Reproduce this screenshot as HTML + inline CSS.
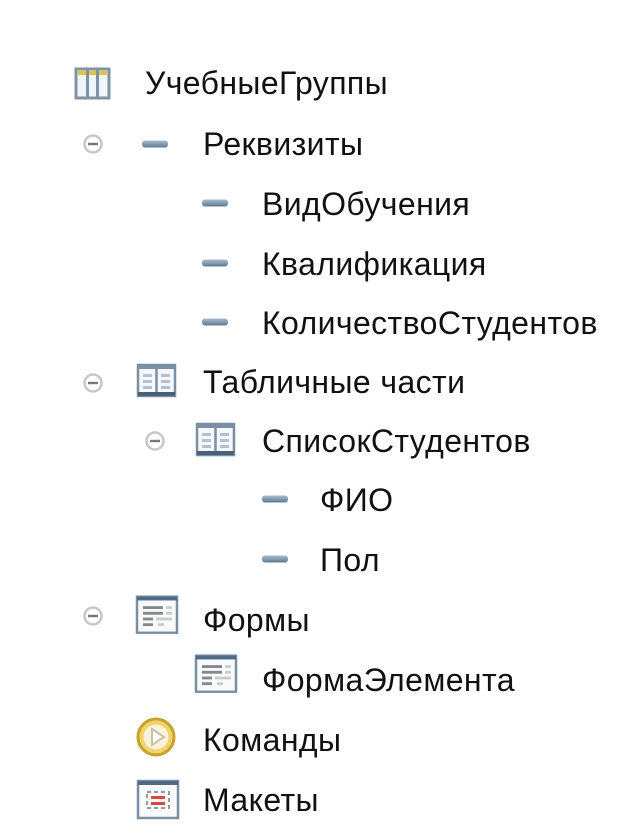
<!DOCTYPE html><html><head><meta charset="utf-8"><style>
body{margin:0;width:631px;height:837px;background:#fff;position:relative;overflow:hidden;font-family:"Liberation Sans","DejaVu Sans",sans-serif;}
.t{position:absolute;font-size:32px;letter-spacing:0.4px;color:#111;line-height:34px;white-space:nowrap}
</style></head><body>
<svg width="631" height="837" style="position:absolute;left:0;top:0">
<defs>
<linearGradient id="bar" x1="0" y1="0" x2="0" y2="1"><stop offset="0" stop-color="#a9bccd"/><stop offset="1" stop-color="#5f7a92"/></linearGradient>
<g id="minus"><circle cx="0" cy="0" r="8.5" fill="#fff" stroke="#c8c8c8" stroke-width="2.5"/><rect x="-5" y="-1.2" width="10" height="2.4" fill="#777"/></g>
<g id="dash"><rect x="0" y="-3.5" width="26" height="7" rx="3" fill="url(#bar)"/></g>
<g id="tbl"><rect x="0" y="-15" width="37" height="31" fill="#f4f7fb" stroke="#7a8fa3" stroke-width="2.5"/><rect x="0" y="-15" width="37" height="4" fill="#7a8fa3"/><line x1="18.5" y1="-15" x2="18.5" y2="16" stroke="#7a8fa3" stroke-width="2.5"/><rect x="5" y="-6" width="9" height="3" fill="#b5c0cc"/><rect x="5" y="0" width="9" height="3" fill="#b5c0cc"/><rect x="5" y="6" width="9" height="3" fill="#b5c0cc"/><rect x="23" y="-6" width="9" height="3" fill="#b5c0cc"/><rect x="23" y="0" width="9" height="3" fill="#b5c0cc"/><rect x="23" y="6" width="9" height="3" fill="#b5c0cc"/><rect x="0" y="12" width="37" height="4" fill="#4a6078"/></g>
<g id="frm"><rect x="1" y="-13" width="40" height="38" fill="#f8fafc" stroke="#7a8fa3" stroke-width="2.5"/><rect x="1" y="-13" width="40" height="4" fill="#4e6a86"/><rect x="7" y="-3" width="20" height="3" fill="#888"/><rect x="30" y="-3" width="6" height="3" fill="#ccc"/><rect x="7" y="3" width="20" height="3" fill="#888"/><rect x="30" y="3" width="6" height="3" fill="#ccc"/><rect x="7" y="9" width="10" height="3" fill="#888"/><rect x="20" y="9" width="16" height="3" fill="#ccc"/><rect x="7" y="15" width="10" height="3" fill="#888"/><rect x="22" y="15" width="6" height="3" fill="#ccc"/></g>
</defs>
<g transform="translate(76,69)"><rect x="0" y="0" width="33" height="29" fill="#eef6fc" stroke="#7f93a4" stroke-width="3"/><rect x="2" y="2" width="29" height="4" fill="#e3c43a"/><line x1="11.5" y1="0" x2="11.5" y2="29" stroke="#7f93a4" stroke-width="3"/><line x1="21.5" y1="0" x2="21.5" y2="29" stroke="#7f93a4" stroke-width="3"/></g>
<use href="#minus" x="93" y="144"/><use href="#dash" x="142" y="144"/>
<use href="#dash" x="202" y="203"/><use href="#dash" x="202" y="263"/><use href="#dash" x="202" y="322"/>
<use href="#minus" x="93" y="383"/>
<use href="#tbl" x="138" y="380"/>
<use href="#minus" x="155" y="441"/>
<use href="#tbl" x="197" y="439"/>
<use href="#dash" x="262" y="499"/><use href="#dash" x="262" y="559"/>
<use href="#minus" x="93" y="616"/>
<g transform="translate(136,609) scale(1,0.95)"><use href="#frm"/></g>
<g transform="translate(195,668) scale(1,0.95)"><use href="#frm"/></g>
<g transform="translate(156,737)"><circle r="18" fill="#f0d46a" stroke="#c9a12e" stroke-width="3"/><circle r="12.5" fill="#fbf3d8"/><path d="M-4,-8 L8,0 L-4,8 Z" fill="#fff" stroke="#c9c0a8" stroke-width="2"/></g>
<g transform="translate(137,780)"><rect x="1" y="1" width="40" height="37" fill="#f8fafc" stroke="#7a8fa3" stroke-width="2.5"/><rect x="1" y="1" width="40" height="4" fill="#4e6a86"/><rect x="10" y="12" width="22" height="16" fill="none" stroke="#999" stroke-width="2" stroke-dasharray="4 3"/><rect x="14" y="16" width="14" height="3" fill="#d94a3c"/><rect x="14" y="22" width="14" height="3" fill="#d94a3c"/></g>
</svg>
<div class="t" style="left:145px;top:66px">УчебныеГруппы</div>
<div class="t" style="left:203px;top:127px">Реквизиты</div>
<div class="t" style="left:262px;top:187px">ВидОбучения</div>
<div class="t" style="left:262px;top:247px">Квалификация</div>
<div class="t" style="left:262px;top:306px">КоличествоСтудентов</div>
<div class="t" style="left:203px;top:365px">Табличные части</div>
<div class="t" style="left:262px;top:424px">СписокСтудентов</div>
<div class="t" style="left:320px;top:483px">ФИО</div>
<div class="t" style="left:320px;top:543px">Пол</div>
<div class="t" style="left:203px;top:603px">Формы</div>
<div class="t" style="left:262px;top:663px">ФормаЭлемента</div>
<div class="t" style="left:203px;top:723px">Команды</div>
<div class="t" style="left:203px;top:783px">Макеты</div>
</body></html>
